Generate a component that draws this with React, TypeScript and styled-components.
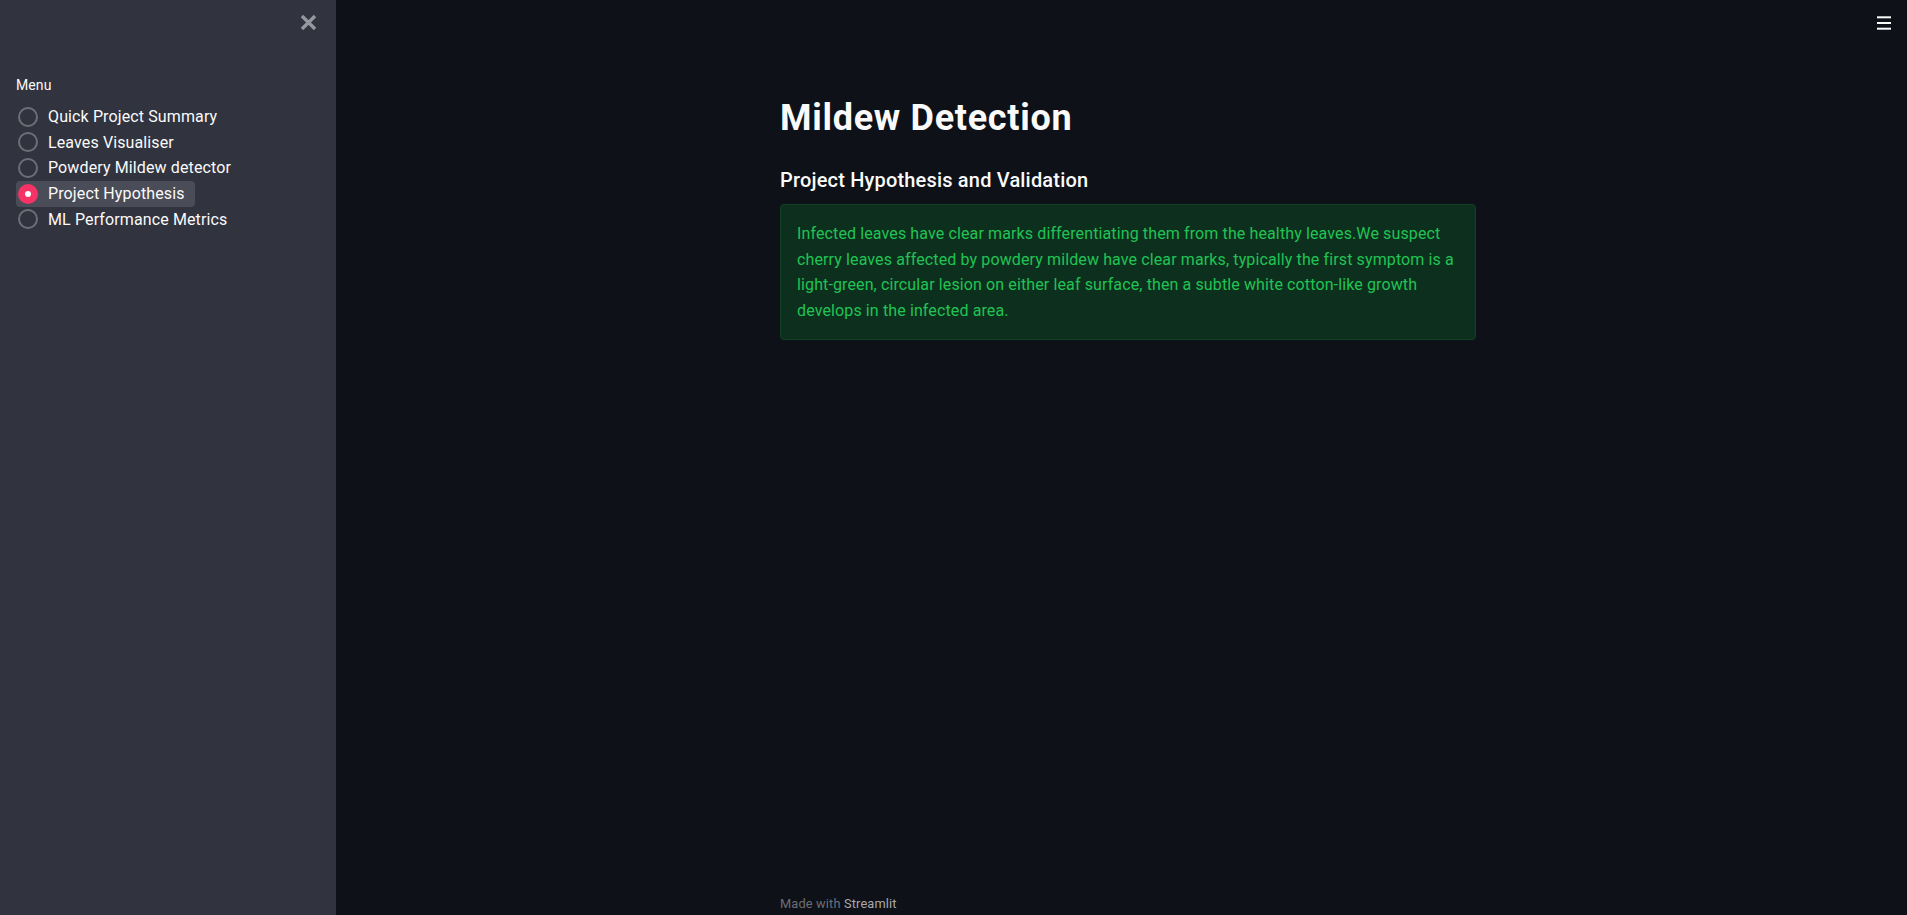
import React, { useState } from "react";
import styled, { createGlobalStyle } from "styled-components";

const GlobalStyle = createGlobalStyle`
  html, body {
    margin: 0;
    padding: 0;
    background: #0e1117;
    font-family: "Roboto", "Noto Sans", sans-serif;
    color: #fafafa;
    overflow: hidden;
  }
  * { box-sizing: border-box; }
`;

const Shell = styled.div`
  display: flex;
  height: 100vh;
  width: 100vw;
`;

const Sidebar = styled.aside`
  width: 336px;
  flex-shrink: 0;
  background: #31333f;
  display: flex;
  flex-direction: column;
  padding: 0 16px;
`;

const SidebarHeader = styled.div`
  display: flex;
  justify-content: flex-end;
  padding-top: 15px;
  padding-right: 4px;
  height: 30px;
`;

const CloseButton = styled.button`
  border: none;
  background: none;
  padding: 0;
  width: 15px;
  height: 15px;
  display: flex;
  cursor: pointer;
`;

const MenuLabel = styled.div`
  margin-top: 46.8px;
  font-size: 14px;
  line-height: 16.8px;
  color: #fafafa;
  letter-spacing: 0.1px;
`;

const RadioList = styled.div`
  margin-top: 10.4px;
  display: flex;
  flex-direction: column;
  align-items: flex-start;
`;

const RadioRow = styled.label<{ $active: boolean }>`
  display: inline-flex;
  align-items: center;
  gap: 10px;
  height: 25.65px;
  padding: 0 10px 0 2px;
  border-radius: 4px;
  background: ${(p) => (p.$active ? "#4a4c57" : "transparent")};
  font-size: 16px;
  line-height: 25.6px;
  letter-spacing: 0.12px;
  color: #fafafa;
  cursor: pointer;
  white-space: nowrap;
`;

const RadioDot = styled.span<{ $active: boolean }>`
  width: 20px;
  height: 20px;
  border-radius: 50%;
  flex-shrink: 0;
  display: flex;
  align-items: center;
  justify-content: center;
  border: ${(p) => (p.$active ? "none" : "2px solid #6d6f77")};
  background: ${(p) => (p.$active ? "#f63366" : "transparent")};
  &::after {
    content: "";
    display: ${(p) => (p.$active ? "block" : "none")};
    width: 6px;
    height: 6px;
    border-radius: 50%;
    background: #ffffff;
  }
`;

const Main = styled.main`
  flex: 1;
  display: flex;
  flex-direction: column;
  padding-left: 13px;
  min-width: 0;
`;

const TopBar = styled.div`
  display: flex;
  justify-content: flex-end;
  padding: 16px 16px 0 0;
  height: 30px;
`;

const MenuButton = styled.button`
  border: none;
  background: none;
  padding: 0;
  width: 14px;
  height: 14px;
  display: flex;
  cursor: pointer;
`;

const Content = styled.div`
  width: 696px;
  margin: 0 auto;
  flex: 1;
  padding-top: 66.8px;
`;

const Title = styled.h1`
  margin: 0;
  font-size: 36px;
  line-height: 43.2px;
  font-weight: 700;
  letter-spacing: 0.7px;
  color: #fafafa;
`;

const Subheader = styled.h3`
  margin: 28px 0 0;
  font-size: 20px;
  line-height: 24px;
  font-weight: 500;
  letter-spacing: 0.18px;
  color: #fafafa;
`;

const SuccessBox = styled.div`
  margin-top: 12px;
  padding: 16px;
  border: 1px solid #143f27;
  border-radius: 4px;
  background: #0d301e;
  color: #21c354;
  font-size: 16px;
  line-height: 25.6px;
  letter-spacing: 0.12px;
`;

const Footer = styled.footer`
  width: 696px;
  margin: 0 auto;
  font-size: 12.8px;
  line-height: 20.5px;
  letter-spacing: 0.15px;
  color: #6c6e76;
  padding-bottom: 0.5px;
`;

const FooterLink = styled.span`
  color: #a7a9b0;
`;

const items = [
  "Quick Project Summary",
  "Leaves Visualiser",
  "Powdery Mildew detector",
  "Project Hypothesis",
  "ML Performance Metrics",
];

export default function App() {
  const [selected, setSelected] = useState(3);
  return (
    <>
      <GlobalStyle />
      <Shell>
        <Sidebar>
          <SidebarHeader>
            <CloseButton aria-label="Close sidebar">
              <svg width="15" height="15" viewBox="0 0 15 15">
                <path
                  d="M2.2 2.2 L12.8 12.8 M12.8 2.2 L2.2 12.8"
                  stroke="#9697a0"
                  strokeWidth="3.4"
                  strokeLinecap="square"
                />
              </svg>
            </CloseButton>
          </SidebarHeader>
          <MenuLabel>Menu</MenuLabel>
          <RadioList>
            {items.map((it, i) => (
              <RadioRow
                key={it}
                $active={i === selected}
                onClick={() => setSelected(i)}
              >
                <RadioDot $active={i === selected} />
                {it}
              </RadioRow>
            ))}
          </RadioList>
        </Sidebar>
        <Main>
          <TopBar>
            <MenuButton aria-label="Menu">
              <svg width="14" height="14" viewBox="0 0 14 14">
                <rect x="0" y="0.3" width="14" height="2" fill="#fafafa" />
                <rect x="0" y="6" width="14" height="2" fill="#fafafa" />
                <rect x="0" y="11.7" width="14" height="2" fill="#fafafa" />
              </svg>
            </MenuButton>
          </TopBar>
          <Content>
            <Title>Mildew Detection</Title>
            <Subheader>Project Hypothesis and Validation</Subheader>
            <SuccessBox>
              Infected leaves have clear marks differentiating them from the
              healthy leaves.We suspect cherry leaves affected by powdery mildew
              have clear marks, typically the first symptom is a light-green,
              circular lesion on either leaf surface, then a subtle white
              cotton-like growth develops in the infected area.
            </SuccessBox>
          </Content>
          <Footer>
            Made with <FooterLink>Streamlit</FooterLink>
          </Footer>
        </Main>
      </Shell>
    </>
  );
}
